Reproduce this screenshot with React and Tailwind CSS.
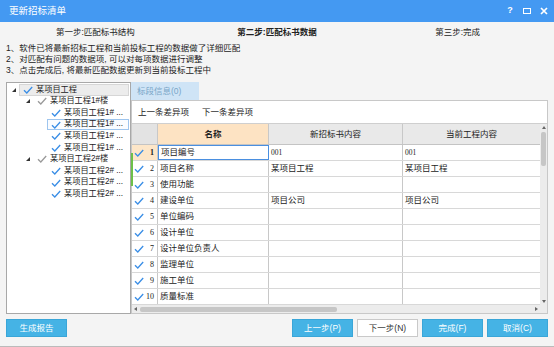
// App.jsx
const Check = ({ color = "#3a8ee6", w = 10 }) => (
  <svg width={w} height="8" viewBox="0 0 10 8" className="shrink-0">
    <path d="M1 4.2 L3.8 7 L9.2 1" fill="none" stroke={color} strokeWidth="1.3" />
  </svg>
);

const Expander = () => (
  <svg width="6" height="6" viewBox="0 0 6 6" className="shrink-0">
    <polygon points="5,1 5,5 1,5" fill="#333" />
  </svg>
);

const tree = [
  { lvl: 0, text: "某项目工程", exp: true, root: true },
  { lvl: 1, text: "某项目工程1#楼", exp: true, grey: true },
  { lvl: 2, text: "某项目工程1# ..." },
  { lvl: 2, text: "某项目工程1# ...", sel: true },
  { lvl: 2, text: "某项目工程1# ..." },
  { lvl: 2, text: "某项目工程1# ..." },
  { lvl: 1, text: "某项目工程2#楼", exp: true, grey: true },
  { lvl: 2, text: "某项目工程2# ..." },
  { lvl: 2, text: "某项目工程2# ..." },
  { lvl: 2, text: "某项目工程2# ..." },
];

const rows = [
  ["项目编号", "001", "001"],
  ["项目名称", "某项目工程", "某项目工程"],
  ["使用功能", "", ""],
  ["建设单位", "项目公司", "项目公司"],
  ["单位编码", "", ""],
  ["设计单位", "", ""],
  ["设计单位负责人", "", ""],
  ["监理单位", "", ""],
  ["施工单位", "", ""],
  ["质量标准", "", ""],
];

const Btn = ({ children, light }) => (
  <button
    className={
      light
        ? "w-[61px] h-[18px] bg-white border border-[#c9c9c9] text-[#333] text-[8.5px]"
        : "w-[61px] h-[18px] bg-[#45b3e5] border border-[#3aa6d8] text-white text-[8.5px]"
    }
  >
    {children}
  </button>
);

export default function App() {
  return (
    <div
      className="w-[554px] h-[347px] bg-[#f4f4f4] flex flex-col text-[8.5px] text-[#222] border-b border-[#bbb]"
      style={{ fontFamily: '"Liberation Sans", "Noto Sans CJK SC", sans-serif' }}
    >
      {/* title bar */}
      <div className="h-[22px] bg-[#4499f2] flex items-center pl-[9px] pr-[6px] text-white shrink-0">
        <span className="text-[9.5px]">更新招标清单</span>
        <div className="ml-auto flex items-center gap-[9px] font-bold">
          <span className="text-[9px] w-[8px] text-center">?</span>
          <span className="w-[8px] h-[6px] border-[1.5px] border-white" />
          <svg width="8" height="8" viewBox="0 0 8 8">
            <path d="M1 1 L7 7 M7 1 L1 7" stroke="white" strokeWidth="1.7" />
          </svg>
        </div>
      </div>

      {/* steps */}
      <div className="grid grid-cols-3 mt-[4px] h-[12px] items-center text-center">
        <span className="pl-[6px]">第一步:匹配标书结构</span>
        <span className="font-bold">第二步:匹配标书数据</span>
        <span className="pr-[8px]">第三步:完成</span>
      </div>

      {/* notes */}
      <div className="mt-[5px] pl-[6px] leading-[11px]">
        <div>1、软件已将最新招标工程和当前投标工程的数据做了详细匹配</div>
        <div>2、对匹配有问题的数据项, 可以对每项数据进行调整</div>
        <div>3、点击完成后, 将最新匹配数据更新到当前投标工程中</div>
      </div>

      {/* main */}
      <div className="flex mt-[6px] mx-[6px] h-[232px]">
        {/* tree */}
        <div className="w-[125px] bg-white border border-[#a8a8a8] pt-[1px] flex flex-col overflow-hidden text-[8.2px]">
          {tree.map((t, i) => (
            <div key={i} className="h-[11.6px] flex items-center whitespace-nowrap pr-[1px]">
              <div className="flex items-center h-full shrink-0" style={{ paddingLeft: 1 + t.lvl * 14 }}>
                <span className="w-[11px] flex justify-center">{t.lvl < 2 ? <Expander /> : null}</span>
              </div>
              <div
                className={
                  t.root
                    ? "flex items-center gap-[3px] h-full flex-1 min-w-0 pl-[3px] bg-[#ececec] border border-[#d6d6d6]"
                    : t.sel
                    ? "flex items-center gap-[3px] h-full flex-1 min-w-0 pl-[3px] border border-[#9ec5ee] bg-[#fafcff]"
                    : "flex items-center gap-[3px] h-full flex-1 min-w-0 pl-[3px] border border-transparent"
                }
              >
                <Check color={t.grey ? "#9a9a9a" : "#3a8ee6"} />
                <span className="overflow-hidden">{t.text}</span>
              </div>
            </div>
          ))}
        </div>

        {/* right */}
        <div className="flex-1 flex flex-col">
          <div className="h-[18px] flex">
            <div className="w-[68px] bg-[#cfe4f6] text-[#7aa6c8] flex items-center pl-[6px]">
              标段信息(0)
            </div>
          </div>
          <div className="flex-1 bg-white border border-[#c8c8c8] flex flex-col">
            <div className="h-[22px] flex items-center gap-[13px] pl-[6px]">
              <span>上一条差异项</span>
              <span>下一条差异项</span>
            </div>
            <div className="flex-1 flex border-t border-[#cfcfcf] min-h-0">
              <div className="flex-1 flex flex-col">
                <div className="grid grid-cols-[26px_111px_134px_1fr] h-[21px] border-b border-[#c4c4c4]">
                  <div className="bg-[#e3e3e3] border-r border-[#c8c8c8]" />
                  <div className="bg-[#fde3c3] border-r border-[#c8c8c8] flex items-center justify-center font-bold">
                    名称
                  </div>
                  <div className="bg-[#e9e9e9] border-r border-[#c8c8c8] flex items-center justify-center">
                    新招标书内容
                  </div>
                  <div className="bg-[#e9e9e9] flex items-center justify-center">当前工程内容</div>
                </div>
                {rows.map((r, i) => (
                  <div
                    key={i}
                    className="grid grid-cols-[26px_111px_134px_1fr] h-[16px] border-b border-[#d8d8d8]"
                  >
                    <div
                      className={
                        i === 0
                          ? "bg-[#fde6c8] border-r border-[#c8c8c8] flex items-center pl-[2px] relative"
                          : "border-r border-[#c8c8c8] flex items-center pl-[2px] relative"
                      }
                    >
                      {i < 2 ? (
                        <span className="absolute left-[-1px] top-[8px] w-[2px] h-[17px] bg-[#6cc04a]" />
                      ) : null}
                      <Check w={10} />
                      <span
                        className={
                          i === 0
                            ? "ml-auto pr-[3px] font-bold text-[8px]"
                            : "ml-auto pr-[3px] text-[8px]"
                        }
                        style={{ fontFamily: '"Liberation Serif", serif' }}
                      >
                        {i + 1}
                      </span>
                    </div>
                    <div
                      className={
                        i === 0
                          ? "border border-[#4a8fe0] flex items-center pl-[2px]"
                          : "border-r border-[#c8c8c8] flex items-center pl-[2px]"
                      }
                    >
                      {r[0]}
                    </div>
                    <div className="border-r border-[#c8c8c8] flex items-center pl-[2px]">
                      <span style={r[1] === "001" ? { fontFamily: '"Liberation Serif", serif', fontSize: 7.5 } : undefined}>
                        {r[1]}
                      </span>
                    </div>
                    <div className="flex items-center pl-[2px]">
                      <span style={r[2] === "001" ? { fontFamily: '"Liberation Serif", serif', fontSize: 7.5 } : undefined}>
                        {r[2]}
                      </span>
                    </div>
                  </div>
                ))}
                <div className="flex-1 grid grid-cols-[26px_111px_134px_1fr]">
                  <div className="border-r border-[#c8c8c8]" />
                  <div className="border-r border-[#c8c8c8]" />
                  <div className="border-r border-[#c8c8c8]" />
                  <div />
                </div>
                {/* horizontal scrollbar */}
                <div className="h-[8px] bg-[#ececec] flex items-center">
                  <svg width="6" height="6" viewBox="0 0 6 6" className="ml-[1px]">
                    <polygon points="4,1 4,5 1,3" fill="#666" />
                  </svg>
                  <div className="ml-[1px] w-[197px] h-[5px] bg-[#c6c6c6] rounded-[2px]" />
                  <svg width="6" height="6" viewBox="0 0 6 6" className="ml-auto mr-[1px]">
                    <polygon points="2,1 2,5 5,3" fill="#666" />
                  </svg>
                </div>
              </div>
              {/* vertical scrollbar */}
              <div className="w-[7px] bg-[#ececec] flex flex-col items-center">
                <svg width="6" height="5" viewBox="0 0 6 5" className="mt-[1px]">
                  <polygon points="1,4 5,4 3,1" fill="#666" />
                </svg>
                <div className="mt-[2px] w-[5px] h-[34px] bg-[#c6c6c6] rounded-[2px]" />
                <svg width="6" height="5" viewBox="0 0 6 5" className="mt-auto mb-[9px]">
                  <polygon points="1,1 5,1 3,4" fill="#666" />
                </svg>
              </div>
            </div>
          </div>
        </div>
      </div>

      {/* buttons */}
      <div className="flex items-center mt-[5px] px-[6px]">
        <Btn>生成报告</Btn>
        <div className="ml-auto flex gap-[4px]">
          <Btn>上一步(P)</Btn>
          <Btn light>下一步(N)</Btn>
          <Btn>完成(F)</Btn>
          <Btn>取消(C)</Btn>
        </div>
      </div>
    </div>
  );
}
